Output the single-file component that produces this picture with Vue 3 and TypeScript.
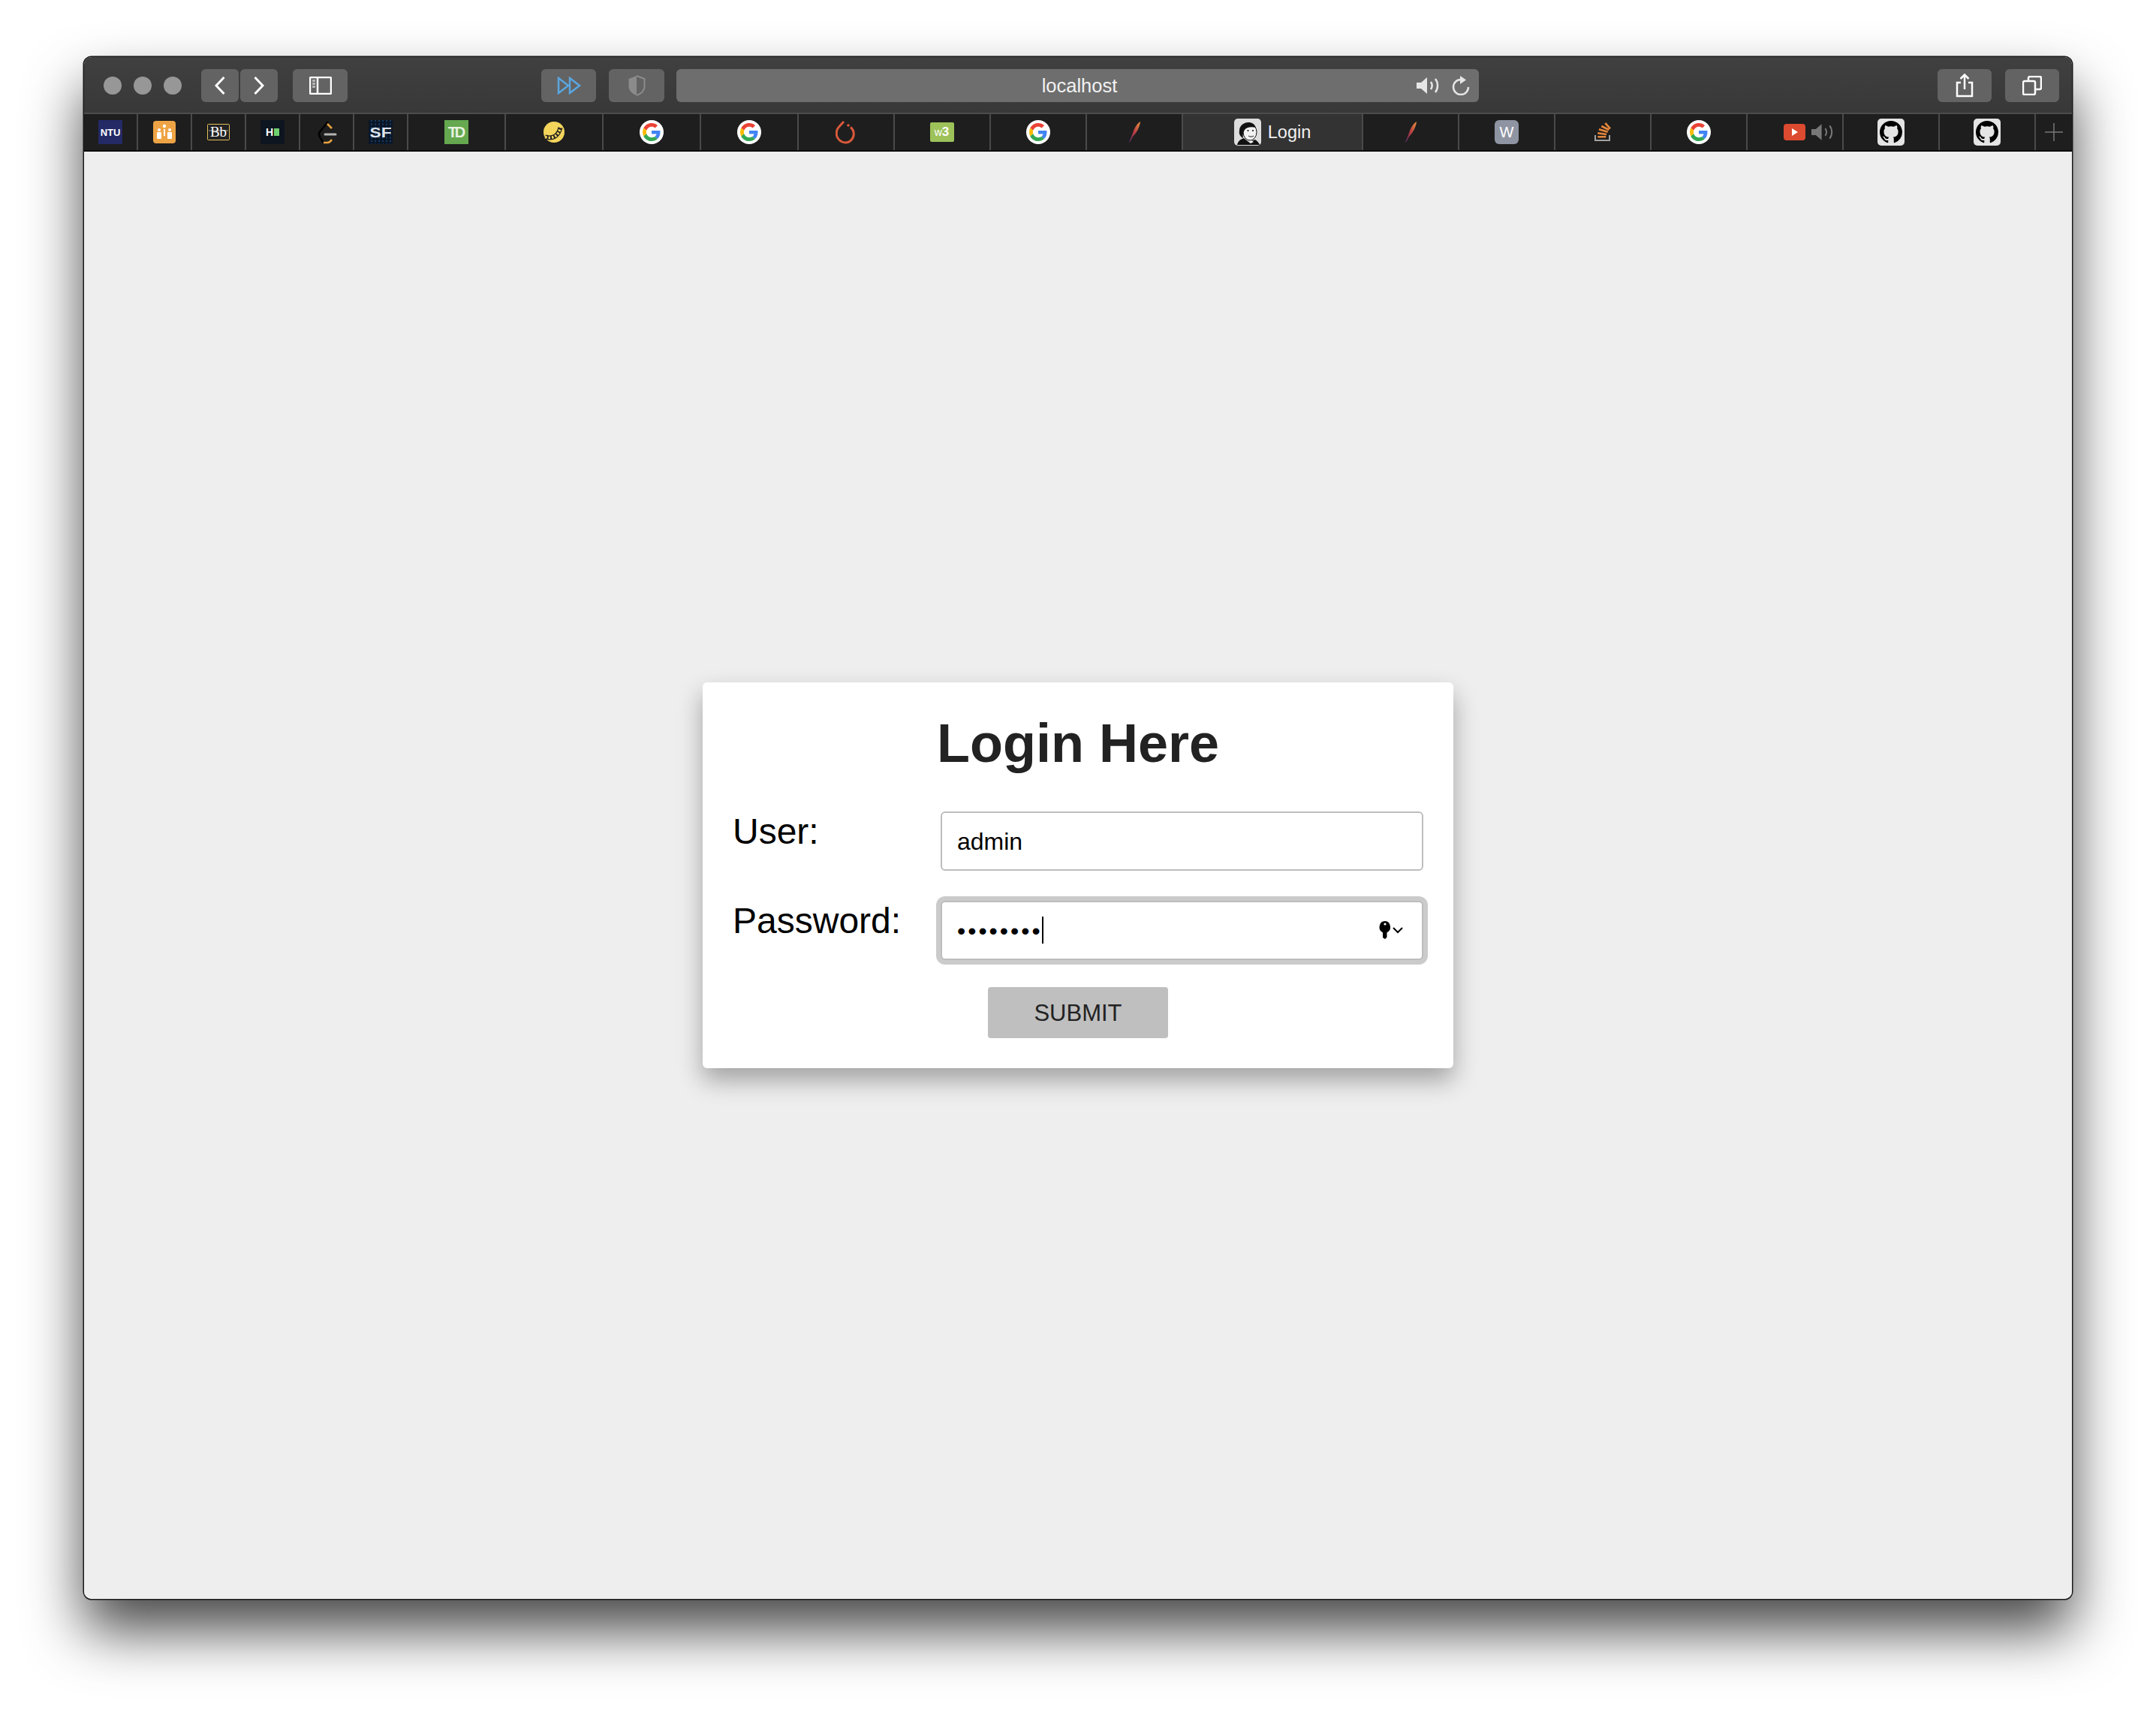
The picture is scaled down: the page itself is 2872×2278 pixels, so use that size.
<template>
  <div class="page">
    <div class="window">
      <header class="toolbar">
        <span class="light"></span>
        <span class="light"></span>
        <span class="light"></span>
        <button class="tool nav first">
          <svg width="14" height="24" viewBox="0 0 14 24"><path d="M12.5 1 2 12l10.5 11" class="line" /></svg>
        </button>
        <button class="tool nav">
          <svg width="14" height="24" viewBox="0 0 14 24"><path d="M1.5 1 12 12 1.5 23" class="line" /></svg>
        </button>
        <button class="tool sidebar">
          <svg width="30" height="24" viewBox="0 0 30 24">
            <rect x="1" y="1" width="28" height="22" rx="1.5" class="line thin" />
            <path d="M11 1v22" class="line thin" />
            <path d="M4 5.5h4M4 9.5h4M4 13.5h4" class="line grey" />
          </svg>
        </button>
        <button class="tool reader">
          <svg width="32" height="24" viewBox="0 0 32 24">
            <path d="M2 2l13 10L2 22zM17 2l13 10-13 10z" class="line blue" />
          </svg>
        </button>
        <button class="tool shield">
          <svg width="24" height="28" viewBox="0 0 24 28">
            <path d="M12 1 1.5 5v10c0 6 5 10 10.5 12z" fill="#8b8b8b" />
            <path d="M12 1l10.5 4v10c0 6-5 10-10.5 12" class="line dim" />
          </svg>
        </button>
        <div class="url">
          <span></span>
          <span class="url-text">localhost</span>
          <span class="url-icons">
            <svg width="33" height="24" viewBox="0 0 33 24">
              <path d="M0 8h6l8-7v22l-8-7H0z" fill="#e6e6e6" />
              <path d="M19 7c2 3 2 7 0 10M25 3c4 5 4 13 0 18" class="line thin light-line" />
            </svg>
            <svg width="24" height="26" viewBox="0 0 24 26">
              <path d="M12 5a10 10 0 1 0 10 10" class="line thin light-line" />
              <path d="M11 0l8 5.500-8 5.500z" fill="#e6e6e6" />
            </svg>
          </span>
        </div>
        <button class="tool end share">
          <svg width="24" height="32" viewBox="0 0 24 32">
            <path d="M7 12H2v18h20V12h-5M12 21V2M6.500 7 12 1.500 17.500 7" class="line thin" />
          </svg>
        </button>
        <button class="tool end windows">
          <svg width="26" height="26" viewBox="0 0 26 26">
            <rect x="1" y="7" width="16" height="18" rx="2" class="line thin" />
            <path d="M8 7V3a2 2 0 0 1 2-2h13a2 2 0 0 1 2 2v13a2 2 0 0 1-2 2h-6" class="line thin" />
          </svg>
        </button>
      </header>

      <nav class="tabs">
        <div
          v-for="(tab, index) in tabs"
          :key="index"
          class="tab"
          :class="tab.size"
        >
          <svg v-if="tab.icon === 'ntu'" width="32" height="32" viewBox="0 0 32 32">
            <rect width="32" height="32" fill="#232a66" />
            <text x="16" y="20.500" text-anchor="middle" class="fav-bold" font-size="13" fill="#fff">NTU</text>
          </svg>
          <svg v-else-if="tab.icon === 'people'" width="30" height="30" viewBox="0 0 30 30">
            <rect width="30" height="30" rx="4" fill="#eea445" />
            <g fill="#fff">
              <circle cx="15" cy="7" r="2.200" />
              <circle cx="8" cy="12" r="2" />
              <circle cx="22" cy="12" r="2" />
              <rect x="5" y="15" width="6" height="9" rx="1" />
              <rect x="19" y="15" width="6" height="9" rx="1" />
              <rect x="14" y="11" width="2" height="9" />
            </g>
          </svg>
          <svg v-else-if="tab.icon === 'bb'" width="30" height="22" viewBox="0 0 30 22">
            <rect x="0.500" y="0.500" width="29" height="21" rx="1" fill="#222" stroke="#e2bf5c" />
            <path d="M2 9h26" stroke="#999" stroke-width="1" />
            <text x="15" y="17" text-anchor="middle" font-family="Liberation Serif, serif" font-size="19" fill="#fff">Bb</text>
          </svg>
          <svg v-else-if="tab.icon === 'hacker'" width="32" height="32" viewBox="0 0 32 32">
            <rect width="32" height="32" fill="#0d1520" />
            <text x="12" y="21" text-anchor="middle" class="fav-bold" font-size="14" fill="#fff">H</text>
            <rect x="18" y="11" width="7" height="10" fill="#6fd06f" />
          </svg>
          <svg v-else-if="tab.icon === 'arc'" width="28" height="32" viewBox="0 0 28 32">
            <path d="M16 2 4 17c-1 2 0 5 6 13" fill="none" stroke="#000" stroke-width="2.500" />
            <path d="M15 5l6 6M10 30h5c3 0 4-1 6-4" fill="none" stroke="#e9a23f" stroke-width="2.500" />
            <path d="M12 19h14" stroke="#b4b4b4" stroke-width="3" stroke-linecap="round" />
          </svg>
          <svg v-else-if="tab.icon === 'sf'" width="32" height="32" viewBox="0 0 32 32">
            <rect width="32" height="32" fill="#0a1626" />
            <path d="M4 0v32M9 0v32M14 0v32M19 0v32M24 0v32M29 0v32" stroke="#1f4a78" stroke-width="1.500" stroke-dasharray="2 2.500" />
            <text x="16" y="22.500" text-anchor="middle" class="fav-bold" font-size="18" fill="#dfe5ec" textLength="29" lengthAdjust="spacingAndGlyphs">SF</text>
          </svg>
          <svg v-else-if="tab.icon === 'td'" width="32" height="32" viewBox="0 0 32 32">
            <rect width="32" height="32" fill="#65a84f" />
            <text x="15" y="23" text-anchor="middle" class="fav-bold" font-size="20" fill="#e8f3e0" letter-spacing="-3">TD</text>
          </svg>
          <svg v-else-if="tab.icon === 'banana'" width="28" height="28" viewBox="0 0 28 28">
            <circle cx="14" cy="14" r="14" fill="#f3d55b" />
            <path d="M2 20.500Q18 25 22.500 8" fill="none" stroke="#222" stroke-width="6" />
            <path d="M2 20.500Q18 25 22.500 8" fill="none" stroke="#f3d55b" stroke-width="3.500" stroke-dasharray="2.500 2" />
          </svg>
          <svg v-else-if="tab.icon === 'google'" width="32" height="32" viewBox="0 0 32 32">
            <circle cx="16" cy="16" r="16" fill="#fff" />
            <g transform="translate(4 4) scale(0.5)">
              <path fill="#EA4335" d="M24 9.500c3.540 0 6.710 1.220 9.210 3.600l6.850-6.850C35.900 2.380 30.470 0 24 0 14.620 0 6.510 5.380 2.560 13.220l7.980 6.190C12.430 13.720 17.740 9.500 24 9.500z" />
              <path fill="#4285F4" d="M46.980 24.550c0-1.570-.15-3.090-.38-4.550H24v9.020h12.940c-.58 2.960-2.260 5.480-4.780 7.180l7.730 6c4.510-4.180 7.090-10.360 7.090-17.650z" />
              <path fill="#FBBC05" d="M10.530 28.590c-.48-1.450-.76-2.990-.76-4.590s.27-3.140.76-4.590l-7.980-6.190C.92 16.460 0 20.120 0 24c0 3.880.92 7.540 2.560 10.780l7.970-6.190z" />
              <path fill="#34A853" d="M24 48c6.480 0 11.930-2.130 15.890-5.810l-7.730-6c-2.150 1.450-4.920 2.300-8.160 2.300-6.260 0-11.570-4.220-13.470-9.910l-7.980 6.190C6.510 42.620 14.620 48 24 48z" />
            </g>
          </svg>
          <svg v-else-if="tab.icon === 'torch'" width="28" height="32" viewBox="0 0 28 32">
            <path d="M11 2 5 8.500C0 13.500 0 22 5 26.500c4.500 4.500 12 4.500 16 0 4.500-4.500 4.500-12.500-1-17" fill="none" stroke="#d9593a" stroke-width="3" />
            <circle cx="17" cy="7" r="1.800" fill="#d9593a" />
          </svg>
          <svg v-else-if="tab.icon === 'w3'" width="32" height="26" viewBox="0 0 32 26">
            <rect width="32" height="26" rx="2" fill="#9dc25a" />
            <text x="15.500" y="18" text-anchor="middle" class="fav" font-size="14" fill="#fff">w<tspan class="fav-bold" font-size="17">3</tspan></text>
          </svg>
          <svg v-else-if="tab.icon === 'feather'" width="18" height="28" viewBox="0 0 18 28">
            <defs>
              <linearGradient :id="`feather-${index}`" x1="1" y1="0" x2="0" y2="1">
                <stop offset="0" stop-color="#e9923a" />
                <stop offset="0.500" stop-color="#b73b43" />
                <stop offset="1" stop-color="#4b2a6b" />
              </linearGradient>
            </defs>
            <path d="M17 0c-5 3-8 9-10 15L3 25l-2 3 3-2 3-6c5-5 9-12 10-20z" :fill="`url(#feather-${index})`" />
          </svg>
          <svg v-else-if="tab.icon === 'jenkins'" width="36" height="36" viewBox="0 0 36 36">
            <rect width="36" height="36" rx="5" fill="#dedede" />
            <ellipse cx="21" cy="18" rx="9" ry="11" fill="#f2f2f2" stroke="#111" stroke-width="1" />
            <path d="M19 5C12 5 7 10 7 16c-1 4 1 8 5 10-1-4 0-8 2-11 2-3 8-5 15-3-2-5-5-7-10-7z" fill="#111" />
            <path d="M4 35c1-5 5-8 9-9l6 5 9-3c3 2 5 4 6 7z" fill="#111" />
            <path d="M19 31l4-2 3 2-4 2z" fill="#f2f2f2" />
            <circle cx="25" cy="16" r="1.100" fill="#111" />
            <circle cx="18.500" cy="16" r="1.100" fill="#111" />
            <path d="M19 23c2 1.500 5 1.500 7 0" fill="none" stroke="#111" stroke-width="1" />
          </svg>
          <svg v-else-if="tab.icon === 'wiki'" width="32" height="32" viewBox="0 0 32 32">
            <rect width="32" height="32" rx="6" fill="#8f94a3" />
            <text x="16" y="23" text-anchor="middle" class="fav" font-size="20" fill="#fff">W</text>
          </svg>
          <svg v-else-if="tab.icon === 'stack'" width="22" height="26" viewBox="0 0 22 26">
            <path d="M1 17v7h19v-7" fill="none" stroke="#a3a3a3" stroke-width="2" />
            <path d="M4.300 19.300h11M4.300 14.300 16 16M6 9.300l11.700 3.400M9.300 5l10 5M14.300 1 21 8.300" fill="none" stroke="#e7873b" stroke-width="2.600" />
          </svg>
          <template v-else-if="tab.icon === 'youtube'">
            <svg class="tab-video" width="29" height="22" viewBox="0 0 29 22">
              <rect width="29" height="22" rx="4" fill="#dc4a30" />
              <path d="M11 6l8 5-8 5z" fill="#fff" />
            </svg>
            <svg class="tab-speaker" width="32" height="24" viewBox="0 0 33 24">
              <path d="M0 8h6l8-7v22l-8-7H0z" fill="#787878" />
              <path d="M19 7c2 3 2 7 0 10M25 3c4 5 4 13 0 18" fill="none" stroke="#787878" stroke-width="2" />
            </svg>
          </template>
          <svg v-else-if="tab.icon === 'github'" width="36" height="36" viewBox="0 0 36 36">
            <rect width="36" height="36" rx="5" fill="#e4e4e4" />
            <g transform="translate(3 3) scale(1.875)">
              <path fill="#000" d="M8 0C3.580 0 0 3.580 0 8c0 3.540 2.290 6.530 5.470 7.590.4.070.55-.17.55-.38 0-.19-.01-.82-.01-1.490-2.010.37-2.530-.49-2.690-.94-.09-.23-.48-.94-.82-1.130-.28-.15-.68-.52-.01-.53.63-.01 1.080.58 1.230.82.72 1.210 1.870.87 2.330.66.07-.52.28-.87.51-1.070-1.780-.2-3.640-.89-3.640-3.950 0-.87.31-1.590.82-2.150-.08-.2-.36-1.020.08-2.120 0 0 .67-.21 2.200.82.64-.18 1.320-.27 2-.27.68 0 1.360.09 2 .27 1.530-1.040 2.200-.82 2.200-.82.44 1.100.16 1.920.08 2.120.51.56.82 1.270.82 2.150 0 3.070-1.870 3.750-3.650 3.950.29.25.54.73.54 1.480 0 1.070-.01 1.930-.01 2.200 0 .21.15.46.55.38A8.013 8.013 0 0016 8c0-4.420-3.580-8-8-8z" />
            </g>
          </svg>
          <span v-if="tab.label" class="tab-label">{{ tab.label }}</span>
        </div>
        <div class="tab plus">
          <svg width="24" height="24" viewBox="0 0 24 24"><path d="M12 0v24M0 12h24" stroke="#777" stroke-width="1.500" /></svg>
        </div>
      </nav>

      <main class="content">
        <form class="card" @submit.prevent>
          <h1 class="title">Login Here</h1>
          <div class="fields">
            <label class="label" for="user">User:</label>
            <input id="user" v-model="user" class="input" type="text" readonly />
            <label class="label" for="password">Password:</label>
            <div class="password-field">
              <input id="password" v-model="password" class="input secret" type="password" readonly />
              <span class="caret"></span>
              <svg class="key" width="33" height="24" viewBox="0 0 33 24">
                <path d="M8 0a7.500 8 0 0 0-3 15.300V22l3 2 2.500-2.500V15.300A7.500 8 0 0 0 8 0z" fill="#000" />
                <circle cx="8" cy="4" r="1.600" fill="#fff" />
                <path d="M19 9l6 6 6-6" fill="none" stroke="#000" stroke-width="2" />
              </svg>
            </div>
          </div>
          <button class="submit" type="submit">SUBMIT</button>
        </form>
      </main>
    </div>
  </div>
</template>

<script setup lang="ts">
import { ref } from 'vue';

interface Tab {
  icon: string;
  size: 'small' | 'wide' | 'narrow' | 'current';
  label?: string;
}

const user = ref('admin');
const password = ref('password');

const tabs: Tab[] = [
  { icon: 'ntu', size: 'small' },
  { icon: 'people', size: 'small' },
  { icon: 'bb', size: 'small' },
  { icon: 'hacker', size: 'small' },
  { icon: 'arc', size: 'small' },
  { icon: 'sf', size: 'small' },
  { icon: 'td', size: 'wide' },
  { icon: 'banana', size: 'wide' },
  { icon: 'google', size: 'wide' },
  { icon: 'google', size: 'wide' },
  { icon: 'torch', size: 'narrow' },
  { icon: 'w3', size: 'narrow' },
  { icon: 'google', size: 'narrow' },
  { icon: 'feather', size: 'narrow' },
  { icon: 'jenkins', size: 'current', label: 'Login' },
  { icon: 'feather', size: 'narrow' },
  { icon: 'wiki', size: 'narrow' },
  { icon: 'stack', size: 'narrow' },
  { icon: 'google', size: 'narrow' },
  { icon: 'youtube', size: 'narrow' },
  { icon: 'github', size: 'narrow' },
  { icon: 'github', size: 'narrow' }
];
</script>

<style>
html,
body {
  margin: 0;
  background: #fff;
}
</style>

<style scoped>
.page {
  box-sizing: border-box;
  width: 2872px;
  height: 2278px;
  padding: 76px 112px 148px;
  overflow: hidden;
  font-family: 'Liberation Sans', Arial, sans-serif;
}

.window {
  display: flex;
  flex-direction: column;
  height: 100%;
  border-radius: 10px;
  overflow: hidden;
  background: #eee;
  box-shadow: 0 0 0 1.5px #1a1a1a, 0 42px 76px rgba(0, 0, 0, 0.72);
}

.toolbar {
  display: flex;
  flex: none;
  align-items: center;
  box-sizing: border-box;
  height: 74px;
  padding: 2px 17px 0 26px;
  background: linear-gradient(#404040, #383838);
}

.light {
  width: 24px;
  height: 24px;
  margin-right: 16px;
  border-radius: 50%;
  background: #979797;
}

.tool {
  display: flex;
  flex: none;
  align-items: center;
  justify-content: center;
  height: 44px;
  padding: 0;
  border: 0;
  border-radius: 6px;
  background: #636363;
}

.nav {
  width: 50px;
  margin-left: 2px;
}

.nav.first {
  margin-left: 10px;
}

.sidebar {
  width: 73px;
  margin-left: 20px;
}

.reader {
  width: 73px;
  margin-left: 258px;
}

.shield {
  width: 74px;
  margin-left: 17px;
}

.end {
  width: 72px;
  margin-left: 18px;
}

.share {
  margin-left: auto;
}

.line {
  fill: none;
  stroke: #fff;
  stroke-width: 3;
}

.line.thin {
  stroke-width: 2.5;
}

.line.grey {
  stroke: #b5b5b5;
}

.line.blue {
  stroke: #5aa6e0;
  stroke-width: 2.500;
}

.line.dim {
  stroke: #8b8b8b;
  stroke-width: 2;
}

.line.light-line {
  stroke: #e6e6e6;
}

.url {
  display: grid;
  flex: none;
  grid-template-columns: 1fr auto 1fr;
  align-items: center;
  box-sizing: border-box;
  width: 1069px;
  height: 44px;
  margin-left: 16px;
  padding: 0 12px 0 17px;
  border-radius: 6px;
  background: #6e6e6e;
  color: #f2f2f2;
  font-size: 25.500px;
}

.url-icons {
  display: flex;
  align-items: center;
  justify-content: flex-end;
  gap: 14px;
}

.tabs {
  display: flex;
  flex: none;
  box-sizing: border-box;
  height: 52px;
  border-top: 2px solid #4c4c4c;
  border-bottom: 2px solid #0c0c0c;
  background: #1e1e1e;
}

.tab {
  display: flex;
  flex: none;
  align-items: center;
  justify-content: center;
  box-sizing: border-box;
  border-right: 2px solid #4a4a4a;
}

.tab.small {
  width: 72px;
}

.tab.wide {
  width: 130px;
}

.tab.narrow {
  width: 128px;
}

.tab.plus {
  flex: 1;
  border-right: 0;
}

.tab.current {
  width: 240px;
  background: #333;
}

.tab-label {
  margin-left: 9px;
  color: #f0f0f0;
  font-size: 23.500px;
}

.tab-video {
  margin-left: 38px;
}

.tab-speaker {
  margin-left: 8px;
}

.fav {
  font-family: 'Liberation Sans', Arial, sans-serif;
}

.fav-bold {
  font-family: 'Liberation Sans', Arial, sans-serif;
  font-weight: 700;
}

.content {
  display: flex;
  flex: 1;
  align-items: center;
  justify-content: center;
  background: #eee;
}

.card {
  display: flex;
  flex-direction: column;
  align-items: center;
  box-sizing: border-box;
  width: 1000px;
  padding: 40px;
  border-radius: 6px;
  background: #fff;
  box-shadow: 0 16px 32px rgba(0, 0, 0, 0.32);
}

.title {
  margin: 0 0 50px;
  color: #222;
  font-size: 72px;
  font-weight: 700;
  line-height: 82px;
}

.fields {
  display: grid;
  grid-template-columns: 277px 1fr;
  row-gap: 40px;
  align-items: start;
  width: 100%;
}

.label {
  color: #000;
  font-size: 48px;
  line-height: 54px;
}

.input {
  display: block;
  box-sizing: border-box;
  width: 100%;
  height: 79px;
  padding: 2px 20px 0;
  border: 2px solid #bdbdbd;
  border-radius: 6px;
  outline: 0;
  background: #fff;
  color: #000;
  font-family: inherit;
  font-size: 32px;
}

.password-field {
  position: relative;
}

.secret {
  border-color: #bdbdbd;
  letter-spacing: 3px;
  box-shadow: 0 0 0 6px #cbcbcb;
}

.caret {
  position: absolute;
  top: 21px;
  left: 135px;
  width: 2px;
  height: 36px;
  background: #000;
}

.key {
  position: absolute;
  top: 27px;
  right: 26px;
}

.submit {
  width: 240px;
  height: 68px;
  margin-top: 36px;
  padding: 2px 0 0;
  border: 0;
  border-radius: 4px;
  background: #bfbfbf;
  color: #222;
  font-family: inherit;
  font-size: 31px;
}
</style>
